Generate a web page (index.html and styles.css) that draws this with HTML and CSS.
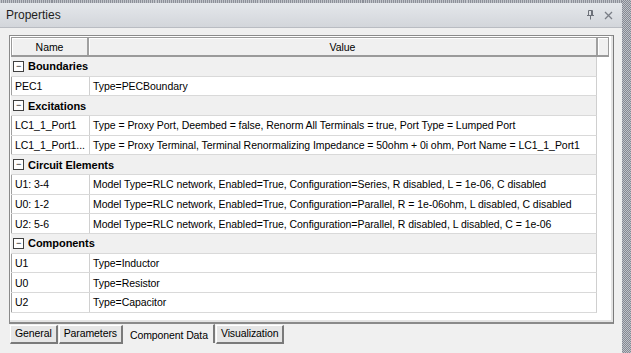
FILE: index.html
```html
<!DOCTYPE html>
<html lang="en">
<head>
  <meta charset="UTF-8">
  <title>Properties</title>
  <link rel="stylesheet" href="styles.css">
</head>
<body>
<div class="window">
  <div class="main">
    <div class="titlebar">
      <span class="title">Properties</span>
      <span class="tools">
        <svg width="9" height="10" viewBox="0 0 9 10"><path d="M2.5 0.5h4v5h-4z M1 5.5h7 M4.5 5.5v4" fill="none" stroke="#6d7179" stroke-width="1"/><path d="M5.5 1v4" stroke="#6d7179"/></svg>
        <svg width="9" height="9" viewBox="0 0 9 9"><path d="M1 1l7 7M8 1l-7 7" stroke="#7a7e86" stroke-width="1.3"/></svg>
      </span>
    </div>
    <div class="body">
      <div class="panel">
        <div class="grid">
          <div class="head">
            <div class="hcell name">Name</div>
            <div class="hcell value">Value</div>
            <div class="hcell spare"></div>
          </div>
          <div class="cat"><span class="box">&minus;</span>Boundaries</div>
          <div class="row"><div class="name">PEC1</div><div class="value">Type=PECBoundary</div></div>
          <div class="cat"><span class="box">&minus;</span>Excitations</div>
          <div class="row"><div class="name">LC1_1_Port1</div><div class="value">Type = Proxy Port, Deembed = false, Renorm All Terminals = true, Port Type = Lumped Port</div></div>
          <div class="row"><div class="name">LC1_1_Port1...</div><div class="value">Type = Proxy Terminal, Terminal Renormalizing Impedance = 50ohm + 0i ohm, Port Name = LC1_1_Port1</div></div>
          <div class="cat"><span class="box">&minus;</span>Circuit Elements</div>
          <div class="row"><div class="name">U1: 3-4</div><div class="value">Model Type=RLC network, Enabled=True, Configuration=Series, R disabled, L = 1e-06, C disabled</div></div>
          <div class="row"><div class="name">U0: 1-2</div><div class="value">Model Type=RLC network, Enabled=True, Configuration=Parallel, R = 1e-06ohm, L disabled, C disabled</div></div>
          <div class="row"><div class="name">U2: 5-6</div><div class="value">Model Type=RLC network, Enabled=True, Configuration=Parallel, R disabled, L disabled, C = 1e-06</div></div>
          <div class="cat"><span class="box">&minus;</span>Components</div>
          <div class="row"><div class="name">U1</div><div class="value">Type=Inductor</div></div>
          <div class="row"><div class="name">U0</div><div class="value">Type=Resistor</div></div>
          <div class="row"><div class="name">U2</div><div class="value">Type=Capacitor</div></div>
        </div>
      </div>
      <div class="tabs">
        <div class="tab">General</div>
        <div class="tab">Parameters</div>
        <div class="tab selected">Component Data</div>
        <div class="tab">Visualization</div>
      </div>
    </div>
  </div>
  <div class="edge"></div>
</div>
</body>
</html>
```

FILE: styles.css
```css
body { margin: 0; font-family: "Liberation Sans", Arial, sans-serif; font-size: 10.5px; letter-spacing: -0.05px; color: #000; background: #f0f0f0; }
.window { display: flex; width: 631px; height: 353px; overflow: hidden; }
.main { flex: 1; display: flex; flex-direction: column; border-top: 3px solid transparent; border-image: repeating-linear-gradient(90deg, #8c9099 0 1px, #c2c5cb 1px 2px) 3; }
.edge { width: 9px; background: repeating-conic-gradient(#858993 0 25%, #bfc2c8 0 50%) 0 0 / 2px 2px; }
.titlebar { height: 24px; display: flex; align-items: center; justify-content: space-between; padding: 0 6px; background: linear-gradient(#e4e7eb, #d3d6db); border-bottom: 1px solid #b9bcc2; }
.title { font-size: 12px; letter-spacing: 0; color: #1e1e1e; }
.tools { display: flex; gap: 9px; align-items: center; padding-right: 3px; }
.body { flex: 1; display: flex; flex-direction: column; padding: 7px 8px 0 9px; background: #f0f0f0; }
.panel { height: 285px; background: #fff; border: 1px solid #8a8a8a; border-right-color: #7a7a7a; border-bottom: 2px solid #8a8a8a; padding: 1px 2px 0 1px; box-shadow: inset -2px -2px 0 #e4e4e4; }
.grid { width: 598px; }
.head { display: flex; height: 20px; border: 1px solid #9a9a9a; border-bottom-width: 2px; box-sizing: border-box; background: #f0f0f0; }
.hcell { display: flex; align-items: center; justify-content: center; border-right: 2px solid #a0a0a0; box-shadow: inset 1px 1px 0 #fff; }
.hcell.name { width: 75px; }
.hcell.value { width: 507px; }
.hcell.spare { flex: 1; border-right: 0; }
.cat, .row { width: 586px; height: 19.67px; box-sizing: border-box; border-bottom: 1px solid #d9d9d9; border-right: 1px solid #cfcfcf; }
.cat { display: flex; align-items: center; background: #f0f0f0; font-weight: bold; font-size: 11px; padding-left: 2px; }
.box { width: 9px; height: 9px; border: 1px solid #404040; display: inline-flex; align-items: center; justify-content: center; font-weight: normal; font-size: 9px; line-height: 1; margin-right: 4px; background: #fff; }
.row { display: flex; }
.row .name, .row .value { display: flex; align-items: center; white-space: nowrap; overflow: hidden; padding-left: 3px; }
.row .name { width: 74px; border-right: 1px solid #d0d0d0; border-left: 1px solid #a0a0a0; }
.row .value { flex: 1; }
.tabs { display: flex; padding-left: 1px; height: 20px; }
.tab { padding: 1px 4px 0; height: 15px; margin-top: 1px; border: 1px solid #fff; border-right: 2px solid #7a7a7a; border-bottom: 2px solid #7a7a7a; background: #e6e6e6; margin-right: 1px; font-size: 10.5px; letter-spacing: -0.1px; }
.tab.selected { margin-top: 0; padding: 4px 5px 0; height: 14px; background: #f0f0f0; border-color: transparent #7a7a7a #7a7a7a transparent; border-bottom: 0; }
```
